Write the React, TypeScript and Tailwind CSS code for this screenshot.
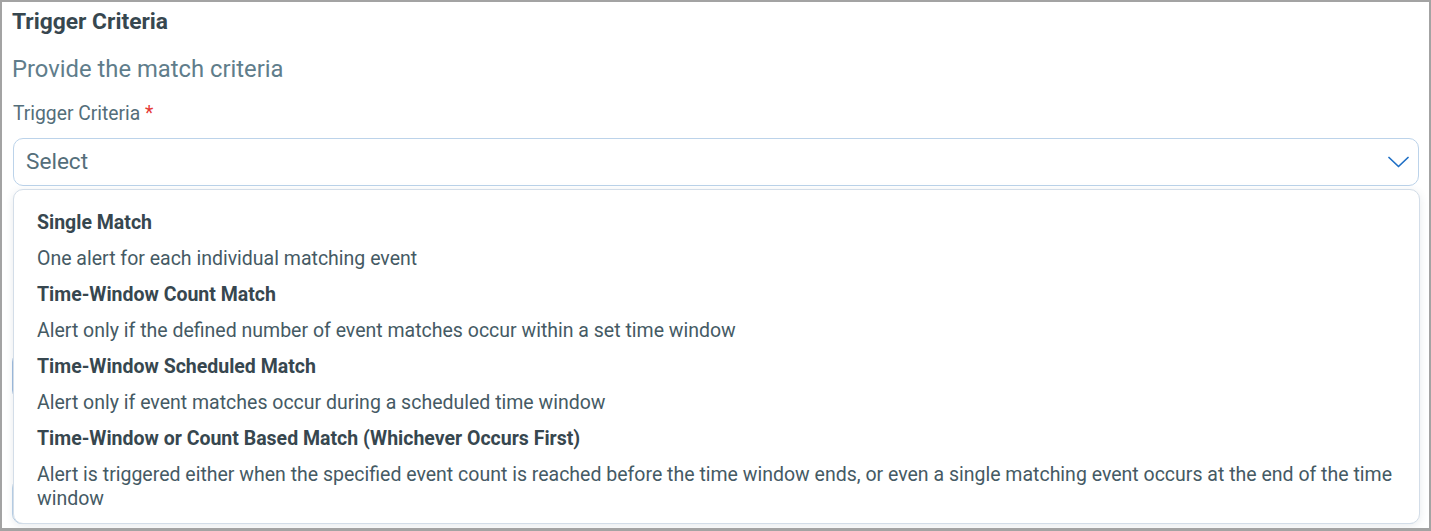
import React from "react";

const options = [
  {
    title: "Single Match",
    description: "One alert for each individual matching event",
  },
  {
    title: "Time-Window Count Match",
    description:
      "Alert only if the defined number of event matches occur within a set time window",
  },
  {
    title: "Time-Window Scheduled Match",
    description: "Alert only if event matches occur during a scheduled time window",
  },
  {
    title: "Time-Window or Count Based Match (Whichever Occurs First)",
    description:
      "Alert is triggered either when the specified event count is reached before the time window ends, or even a single matching event occurs at the end of the time window",
  },
];

function Chevron() {
  return (
    <svg width="21" height="12" viewBox="0 0 21 12" fill="none" aria-hidden="true">
      <polyline
        points="1,1.5 10.5,10.5 20,1.5"
        stroke="#1f6fc5"
        strokeWidth="1.7"
        strokeLinecap="round"
        strokeLinejoin="round"
      />
    </svg>
  );
}

export default function App() {
  return (
    <div className="h-[531px] w-[1431px] overflow-hidden border-2 border-b-[3px] border-[#a3a3a3] bg-white font-['Roboto','Liberation_Sans',sans-serif]">
      <div className="relative px-[10px] pt-[6px]">
        <h2 className="text-[22.8px] font-bold leading-[28px] text-[#37474f]">Trigger Criteria</h2>
        <p className="mt-[19px] text-[23.8px] leading-[28px] text-[#607d8b]">Provide the match criteria</p>

        <label className="mt-[19px] block pl-[1px] text-[19.3px] leading-[24px] text-[#546e7a]">
          Trigger Criteria <span className="text-[#e53935]">*</span>
        </label>
        <div className="ml-[1px] mt-[12px] flex h-[48px] items-center justify-between rounded-[10px] border border-[#bcd3ea] bg-white pl-[12px] pr-[9px]">
          <span className="text-[22.6px] text-[#546e7a]">Select</span>
          <Chevron />
        </div>

        {/* fields hidden behind the open menu */}
        <div className="mt-[166px] h-[48px] rounded-[10px] border border-[#9fbde0]" />
        <div className="mt-[78px] h-[46px] rounded-[10px] border border-[#bcd3ea]" />

        <ul className="absolute left-[11px] right-[9px] top-[187px] h-[335px] rounded-[10px] border border-[#d3dde8] bg-white px-[23px] pt-[15px] shadow-[0_2px_8px_rgba(60,80,110,0.12)]">
          {options.map((o) => (
            <li key={o.title}>
              <div className="py-[6px] text-[19.5px] font-bold leading-[24px] text-[#37474f]">{o.title}</div>
              <div className="py-[6px] text-[19.5px] leading-[24px] text-[#455a64]">{o.description}</div>
            </li>
          ))}
        </ul>
      </div>
    </div>
  );
}
